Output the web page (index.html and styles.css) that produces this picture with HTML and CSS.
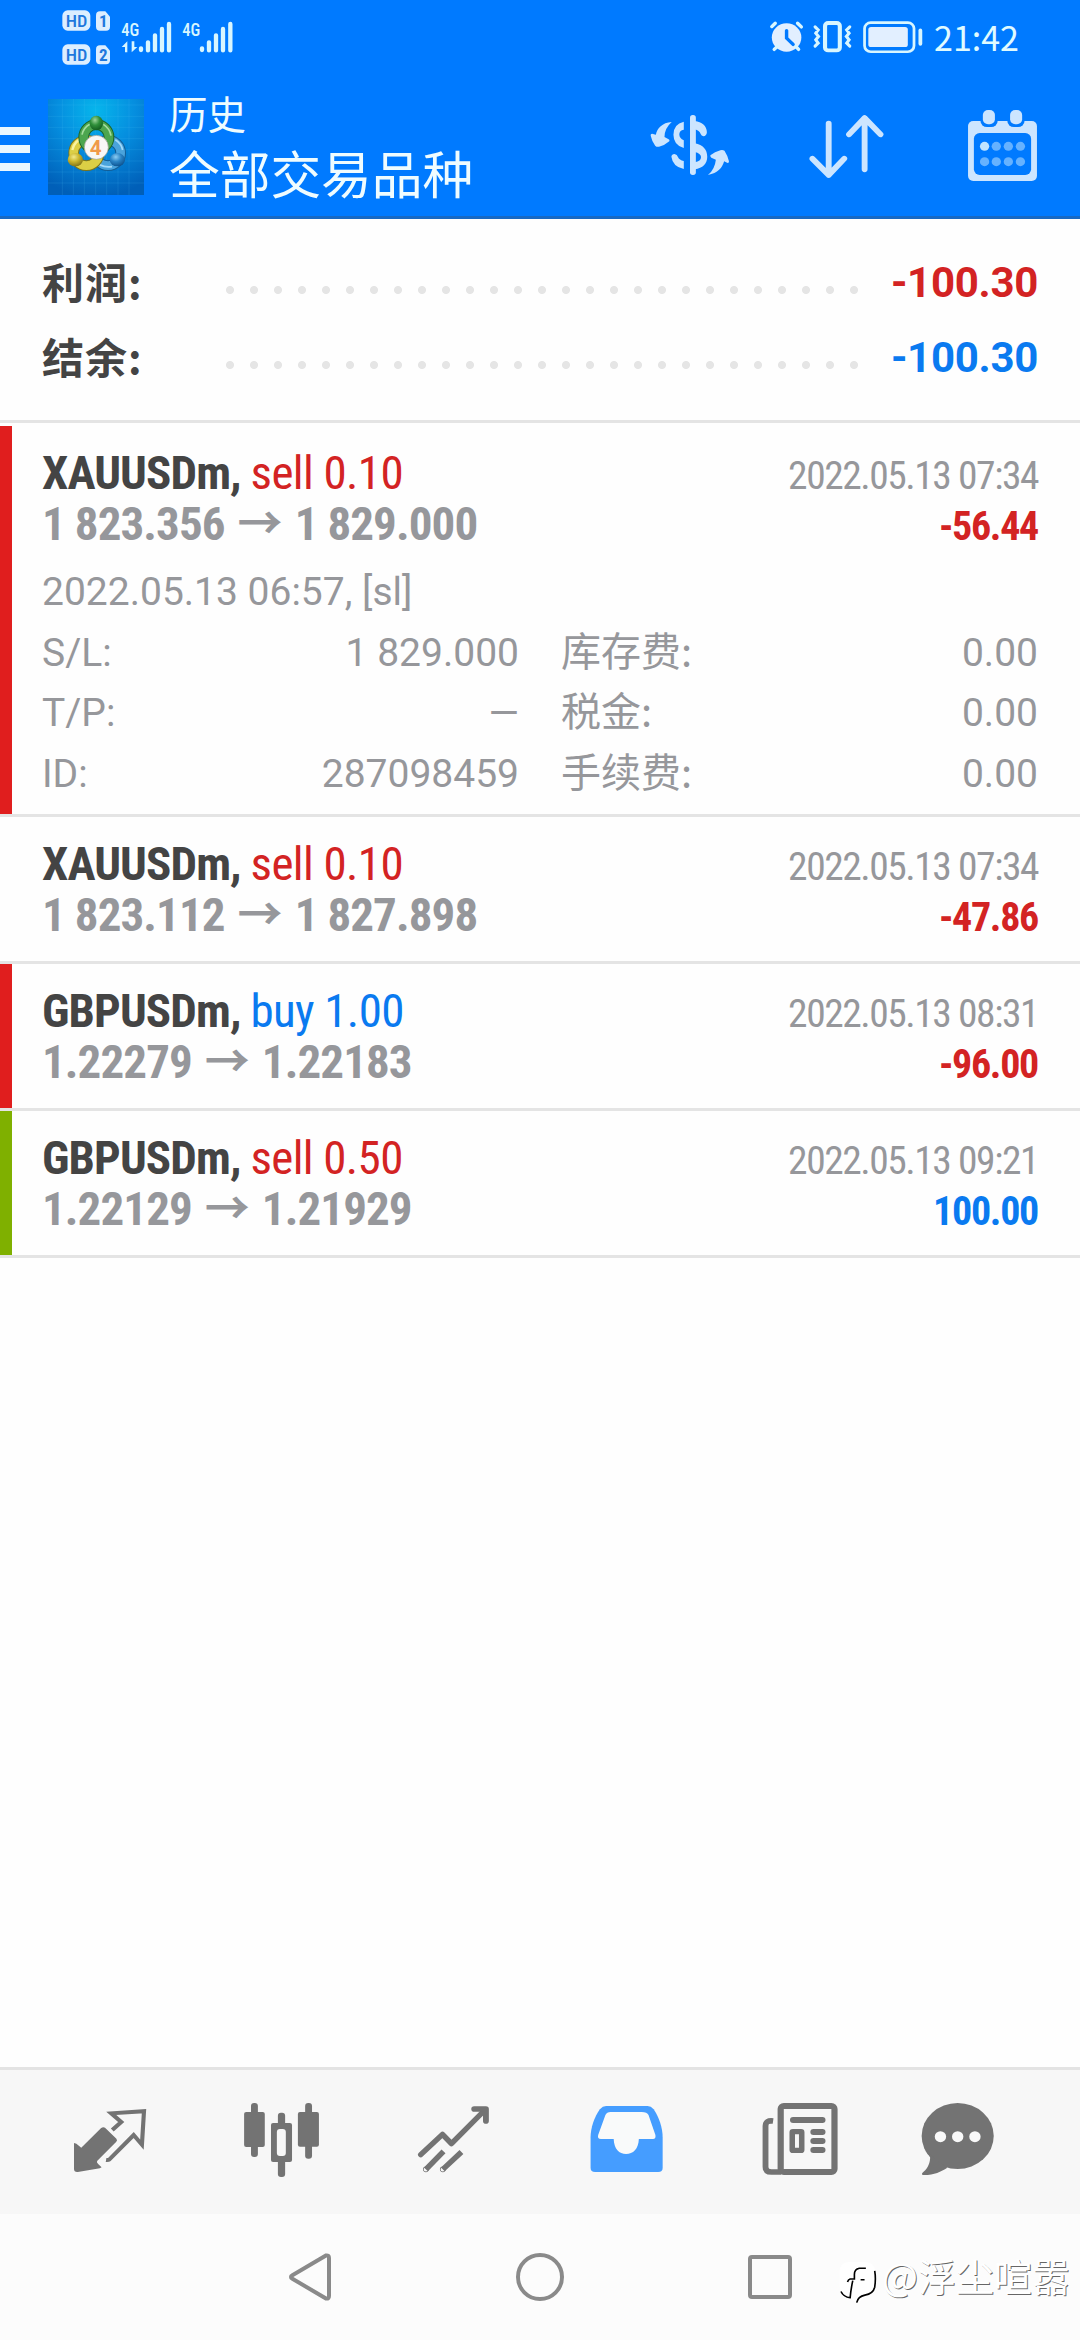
FILE: index.html
```
<!DOCTYPE html>
<html lang="zh-CN">
<head>
<meta charset="utf-8">
<title>历史</title>
<link rel="stylesheet" href="styles.css">
</head>
<body>
<div class="screen">
  <header class="header">
    <div class="status">
      <svg class="status-left" viewBox="0 0 600 225">
        <g fill="#dceeff">
          <rect x="37" y="31" width="84" height="61" rx="16"/>
          <path d="M150 34H166L180 50V80Q180 92 168 92H150Q138 92 138 80V46Q138 34 150 34Z"/>
          <rect x="37" y="133" width="84" height="61" rx="16"/>
          <path d="M150 136H166L180 152V181Q180 193 168 193H150Q138 193 138 181V148Q138 136 150 136Z"/>
        </g>
        <g class="badge-text">
          <text x="47" y="80" textLength="65" lengthAdjust="spacingAndGlyphs">HD</text>
          <text x="147" y="81" class="sim">1</text>
          <text x="47" y="182" textLength="65" lengthAdjust="spacingAndGlyphs">HD</text>
          <text x="147" y="183" class="sim">2</text>
        </g>
        <g class="net-text">
          <text x="214" y="107" textLength="54" lengthAdjust="spacingAndGlyphs">4G</text>
          <text x="397" y="107" textLength="54" lengthAdjust="spacingAndGlyphs">4G</text>
        </g>
        <path fill="#d8f6ff" d="M232 124V157H225V141H215ZM245 124V157L262 141H253V124Z"/>
        <g stroke="#d8f6ff" stroke-width="13" stroke-linecap="round">
          <path d="M273 145V150M294 127V151M315 106V151M336 87V151M357 72V151"/>
          <path d="M456 145V150M477 127V151M498 106V151M519 87V151M541 72V151"/>
        </g>
      </svg>
      <div class="status-right">
        <svg class="status-icons" viewBox="655 55 460 115" preserveAspectRatio="none">
          <circle cx="712" cy="114" r="43" fill="#e2efff"/>
          <g stroke="#d8f6ff" stroke-width="10" stroke-linecap="round" fill="none">
            <path d="M669 81L679 71M744 71L755 82M676 150L686 140M747 150L738 140"/>
            <path stroke="#007aff" d="M712 93V116L731 135"/>
            <rect x="824" y="70" width="43" height="83" rx="9" stroke-width="12"/>
            <path stroke-width="9" d="M795 82L804 91L797 101L805 111L797 121L804 131L795 140M896 82L887 91L894 101L886 111L894 121L887 131L896 140"/>
            <rect x="939" y="69" width="144" height="88" rx="18" stroke-width="8"/>
          </g>
          <rect x="950" y="82" width="115" height="61" rx="8" fill="#e2efff"/>
          <rect x="1096" y="87" width="11" height="52" rx="6" fill="#d8f6ff"/>
        </svg>
        <span class="clock">21:42</span>
      </div>
    </div>
    <div class="toolbar">
      <div class="menu"><i></i><i></i><i></i></div>
      <svg class="logo" viewBox="12 12 288 288">
        <defs>
          <radialGradient id="sky" cx=".5" cy=".12" r=".9"><stop offset="0" stop-color="#06b6ec"/><stop offset=".45" stop-color="#058edf"/><stop offset="1" stop-color="#005fb8"/></radialGradient>
          <radialGradient id="green" cx=".4" cy=".3" r=".7"><stop offset="0" stop-color="#9ed69b"/><stop offset=".5" stop-color="#2f8f3a"/><stop offset="1" stop-color="#145f20"/></radialGradient>
          <radialGradient id="gold" cx=".4" cy=".3" r=".7"><stop offset="0" stop-color="#f2ea8a"/><stop offset=".5" stop-color="#c9b52c"/><stop offset="1" stop-color="#86781a"/></radialGradient>
          <radialGradient id="azure" cx=".4" cy=".3" r=".7"><stop offset="0" stop-color="#8ccdf3"/><stop offset=".5" stop-color="#2a84c6"/><stop offset="1" stop-color="#0f5592"/></radialGradient>
        </defs>
        <rect x="12" y="12" width="288" height="288" fill="url(#sky)"/>
        <path stroke="#5cc8f5" stroke-opacity=".22" stroke-width="2" d="M55 12V300M88 12V300M121 12V300M155 12V300M188 12V300M222 12V300M255 12V300M12 30H300M12 64H300M12 97H300M12 131H300M12 164H300M12 198H300M12 231H300M12 264H300"/>
        <g fill="none">
          <circle cx="192" cy="174" r="38" stroke="#145d94" stroke-width="32"/>
          <circle cx="192" cy="174" r="38" stroke="#4aa3dc" stroke-width="26"/>
          <path d="M150 192Q168 220 204 215M214 134Q232 145 236 165" stroke="#a3dafa" stroke-width="5"/>
          <circle cx="127" cy="174" r="38" stroke="#7d7418" stroke-width="32"/>
          <circle cx="127" cy="174" r="38" stroke="#dccf45" stroke-width="26"/>
          <path d="M85 165Q91 136 119 129" stroke="#faf3a0" stroke-width="7"/>
          <circle cx="157" cy="127" r="38" stroke="#1d6527" stroke-width="32"/>
          <circle cx="157" cy="127" r="38" stroke="#4da64f" stroke-width="26"/>
          <path d="M114 119Q119 98 137 88M178 88Q197 100 201 122" stroke="#a7dda0" stroke-width="5"/>
        </g>
        <ellipse cx="157" cy="84" rx="20" ry="22" fill="url(#green)"/>
        <ellipse cx="94" cy="194" rx="23" ry="20" fill="url(#gold)"/>
        <ellipse cx="220" cy="194" rx="23" ry="20" fill="url(#azure)"/>
        <circle cx="157" cy="157" r="36" fill="#f8f7f6" stroke="#9b9b8f" stroke-width="2"/>
        <text x="155" y="179" text-anchor="middle" class="logo-num">4</text>
      </svg>
      <div class="titles">
        <div class="subtitle">历史</div>
        <div class="title">全部交易品种</div>
      </div>
      <div class="actions">
        <svg class="act-exchange" viewBox="320 324 232 225" preserveAspectRatio="none" fill="#cce5ff">
          <path d="M383 366C355 368 341 385 337 404L326 401Q321 401 322 407Q326 425 335 437Q340 442 346 440Q362 437 376 424Q378 420 374 418L362 411Q362 385 383 366Z"/>
          <path d="M488 525C517 520 530 503 535 484L545 489Q550 489 549 484Q546 468 536 452Q530 449 524 451Q508 455 495 466Q494 470 498 473L511 479Q508 508 488 525Z"/>
          <rect x="436" y="345" width="17" height="180" rx="8"/>
          <path d="M418 365V389Q405 391 405 403Q405 415 418 421V444Q388 435 388 404Q388 372 418 365Z"/>
          <path d="M382 470Q383 462 391 462Q399 463 401 471Q405 480 418 483V507Q386 500 382 470Z"/>
          <path d="M450 363C470 366 485 377 485 397Q484 408 475 409Q469 407 467 402Q463 391 450 388Z"/>
          <path d="M450 430C474 434 486 450 486 470C486 491 473 504 450 508V487Q468 484 468 471Q467 460 450 456Z"/>
        </svg>
        <svg class="act-sort" viewBox="780 324 220 225" preserveAspectRatio="none" fill="none" stroke="#cce5ff" stroke-width="17" stroke-linecap="round" stroke-linejoin="round">
          <path d="M837 371V525M790 476L837 525L882 476M941 508V355M896 403L941 354L987 403"/>
        </svg>
        <svg class="act-calendar" viewBox="1240 324 206 225" preserveAspectRatio="none">
          <rect x="1243" y="363" width="200" height="180" rx="15" fill="#cce5ff"/>
          <rect x="1260" y="399" width="166" height="126" rx="17" fill="#007aff"/>
          <rect x="1279" y="318" width="50" height="63" rx="19" fill="#007aff"/>
          <rect x="1357" y="318" width="50" height="63" rx="19" fill="#007aff"/>
          <rect x="1286" y="330" width="35" height="43" rx="15" fill="#cce5ff"/>
          <rect x="1365" y="330" width="35" height="43" rx="15" fill="#cce5ff"/>
          <g fill="#66b2ff">
            <circle cx="1291" cy="439" r="13.5" fill="#bfe4ff"/><circle cx="1325" cy="439" r="13.5"/><circle cx="1360" cy="439" r="13.5"/><circle cx="1395" cy="439" r="13.5"/>
            <circle cx="1291" cy="485" r="13.5"/><circle cx="1325" cy="485" r="13.5"/><circle cx="1360" cy="485" r="13.5"/><circle cx="1395" cy="485" r="13.5"/>
          </g>
        </svg>
      </div>
    </div>
  </header>

  <section class="summary">
    <div class="sum-row"><span class="sum-label">利润:</span><span class="dots"></span><span class="sum-value red">-100.30</span></div>
    <div class="sum-row"><span class="sum-label">结余:</span><span class="dots"></span><span class="sum-value blue">-100.30</span></div>
  </section>

  <main class="deals">
    <article class="deal loss first">
      <div class="line"><span class="name"><b>XAUUSDm,</b> <span class="side red">sell 0.10</span></span><time>2022.05.13 07:34</time></div>
      <div class="line"><span class="price">1 823.356 <i>→</i> 1 829.000</span><span class="profit red">-56.44</span></div>
      <div class="details">
        <div class="comment">2022.05.13 06:57, [sl]</div>
        <div class="pair"><span>S/L:</span><span>1 829.000</span></div><div class="pair"><span class="cjk">库存费:</span><span>0.00</span></div>
        <div class="pair"><span>T/P:</span><span>—</span></div><div class="pair"><span class="cjk">税金:</span><span>0.00</span></div>
        <div class="pair"><span>ID:</span><span>287098459</span></div><div class="pair"><span class="cjk">手续费:</span><span>0.00</span></div>
      </div>
    </article>
    <article class="deal">
      <div class="line"><span class="name"><b>XAUUSDm,</b> <span class="side red">sell 0.10</span></span><time>2022.05.13 07:34</time></div>
      <div class="line"><span class="price">1 823.112 <i>→</i> 1 827.898</span><span class="profit red">-47.86</span></div>
    </article>
    <article class="deal loss">
      <div class="line"><span class="name"><b>GBPUSDm,</b> <span class="side blue">buy 1.00</span></span><time>2022.05.13 08:31</time></div>
      <div class="line"><span class="price">1.22279 <i>→</i> 1.22183</span><span class="profit red">-96.00</span></div>
    </article>
    <article class="deal gain">
      <div class="line"><span class="name"><b>GBPUSDm,</b> <span class="side red">sell 0.50</span></span><time>2022.05.13 09:21</time></div>
      <div class="line"><span class="price">1.22129 <i>→</i> 1.21929</span><span class="profit blue">100.00</span></div>
    </article>
  </main>

  <nav class="tabs">
    <svg viewBox="203.4 150 232 240" preserveAspectRatio="none">
      <path fill="#737373" d="M215 279L222 281L236 293L293 235Q299 229 305 233L338 266Q342 271 337 276L282 333Q280 337 285 342L295 352L290 355L226 366Q215 367 215 357Z"/>
      <path fill="none" stroke="#737373" stroke-width="12" d="M326 240L352 216L323 190L418 183.500L412 284L388 255L318 328Q314 331 308 330"/>
    </svg>
    <svg viewBox="702.9 150 232 240" preserveAspectRatio="none" fill="#737373">
      <rect x="729" y="159" width="20" height="162" rx="9"/><rect x="709" y="186" width="60" height="105" rx="6"/>
      <rect x="886" y="159" width="20" height="167" rx="9"/><rect x="865" y="186" width="61" height="104" rx="6"/>
      <rect x="807" y="188" width="21" height="193" rx="9"/><rect x="787" y="219" width="61" height="117" rx="6"/>
      <rect x="804" y="237" width="26" height="81" rx="9" fill="#f7f7f7"/>
    </svg>
    <svg viewBox="1202.4 150 232 240" preserveAspectRatio="none" fill="none" stroke="#737373" stroke-width="16" stroke-linejoin="round">
      <path stroke-linecap="round" d="M1222 314L1285 253L1311 281L1405 183"/>
      <path stroke-linecap="round" stroke-width="17" d="M1377 177H1411V213"/>
      <path d="M1237 358L1288 304M1286 358L1340 306"/>
      <circle cx="1237" cy="358" r="1" stroke-width="15"/><circle cx="1286" cy="358" r="1" stroke-width="15"/>
    </svg>
    <svg viewBox="133.700 150 232 240" preserveAspectRatio="none">
      <path fill="#459dff" d="M147 262C147 235 158 200 174 178Q182 168 192 168H312Q322 168 330 178C345 200 356 235 356 262V353Q356 366 343 366H160Q147 366 147 353Z"/>
      <path fill="#f9fafa" d="M205 186H295Q311 186 315 195L335 255Q337 267 328 267H287C286 297 270 312 250 312C230 312 215 297 214 267H177Q166 267 169 255L190 195Q194 186 205 186Z"/>
    </svg>
    <svg viewBox="633.2 150 232 240" preserveAspectRatio="none" fill="none" stroke="#737373">
      <rect x="699" y="168" width="156" height="198" rx="9" stroke-width="18"/>
      <path stroke-width="17" d="M677 213Q655 210 655 228V350Q655 366 672 366H700"/>
      <path stroke-width="18" stroke-linecap="round" d="M735 210H820M794 246H820M794 273H820M794 300H820"/>
      <rect x="732.500" y="245" width="27.500" height="56" rx="2" stroke-width="16"/>
    </svg>
    <svg viewBox="1132.7 150 232 240" preserveAspectRatio="none">
      <g fill="#737373"><ellipse cx="1213" cy="258" rx="104.500" ry="99"/>
      <path d="M1117 300Q1136 320 1133 325C1132 345 1122 360 1111 368Q1106 375 1116 375C1145 375 1165 365 1183 353Z"/></g>
      <g fill="#f9f9f9"><circle cx="1163" cy="260" r="16.500"/><circle cx="1213" cy="260" r="16.500"/><circle cx="1263" cy="260" r="16.500"/></g>
    </svg>
  </nav>

  <footer class="sysnav">
    <svg viewBox="0 0 48 48"><path d="M5 24Q5 23 6 22.500L40 2.500Q43 2 43 5V43Q43 46 40 45.500L6 25.500Q5 25 5 24Z"/></svg>
    <svg viewBox="0 0 48 48"><circle cx="24" cy="24" r="22"/></svg>
    <svg viewBox="0 0 48 48"><rect x="4" y="4" width="40" height="40" rx="2"/></svg>
  </footer>
  <div class="watermark">
    <svg viewBox="56 60 116 132">
      <path fill="#fff" d="M82 66H140Q168 68 168 100V140Q166 165 140 170L112 190L82 172Q58 166 58 140V92Q60 68 82 66Z"/>
      <path fill="none" stroke="#000" stroke-width="5" d="M138 84H118Q103 87 103 103V117H90Q84 119 82 126M103 117V119M122 119H134M98 122Q92 150 90 174Q70 172 62 155M165 92Q169 115 165 142Q160 162 135 166Q114 170 110 189"/>
    </svg>
    <span>@浮尘喧嚣</span>
  </div>
</div>
</body>
</html>
```
FILE: styles.css
```
* { box-sizing: border-box; }
body { margin: 0; background: #fff; }
svg { display: block; flex: none; }

.screen {
  position: relative;
  display: flex;
  flex-direction: column;
  width: 1080px;
  height: 2340px;
  overflow: hidden;
  background: #fefefe;
  font-family: Roboto, "Noto Sans CJK SC", sans-serif;
}
.red { color: #d32323; }
.blue { color: #0a7af0; }

/* header */
.header { height: 219px; background: #007aff; border-bottom: 3px solid #1769c4; }
.status { display: flex; justify-content: space-between; height: 75px; padding: 0 61px 0 50px; }
.status-left { width: 200px; height: 75px; }
.badge-text { font: 500 51px "Roboto Condensed", sans-serif; fill: #1f78dd; }
.badge-text .sim { font-weight: 700; }
.net-text { font: 500 57px "Roboto Condensed", sans-serif; fill: #d8f6ff; }
.status-right { display: flex; align-items: flex-start; gap: 9px; }
.status-icons { width: 158px; height: 38px; margin-top: 18px; }
.clock { font: 400 34px/50px "Noto Sans CJK SC", sans-serif; margin-top: 12px; color: #e0fbff; }

.toolbar { display: flex; height: 141px; }
.menu { display: flex; flex-direction: column; gap: 10px; width: 30px; margin-top: 52px; }
.menu i { height: 8px; background: #eaf7ff; }
.logo { width: 96px; height: 96px; margin: 24px 0 0 18px; }
.logo-num { font: 700 62px Roboto, sans-serif; fill: #f09a4a; }
.titles { flex: 1; padding: 11px 0 0 25px; color: #effcff; font-family: "Noto Sans CJK SC", sans-serif; white-space: nowrap; }
.subtitle { font-size: 38.5px; line-height: 52px; }
.title { font-size: 50.7px; line-height: 68px; }
.actions { display: flex; padding: 33px 42px 0 0; }
.actions svg { height: 75px; }
.act-exchange { width: 80px; }
.act-sort { width: 76px; margin-left: 79px; }
.act-calendar { width: 71px; margin-left: 82px; }

/* summary */
.summary { height: 204px; padding: 26px 42px 0; border-bottom: 3px solid #e4e4e4; }
.sum-row { display: flex; height: 75px; line-height: 75px; font-size: 42px; font-weight: 700; }
.sum-label { width: 176px; color: #444; font-family: "Noto Sans CJK SC", sans-serif; line-height: 71px; letter-spacing: 1px; }
.dots { width: 648px; background: radial-gradient(circle at 12px 45px, #e5e5e5 3.6px, transparent 4.4px) 0 0 / 24px 75px repeat-x; }
.sum-value { flex: 1; text-align: right; white-space: nowrap; letter-spacing: -0.3px; }

/* deals */
.deals { flex: 1; padding-top: 3px; }
.deal { height: 147px; padding: 21px 42px 0; border-bottom: 3px solid #e4e4e4; }
.deal.loss { background: linear-gradient(#e01e1e, #e01e1e) 0 0 / 12px 100% no-repeat; }
.deal.gain { background: linear-gradient(#7fb000, #7fb000) 0 0 / 12px 100% no-repeat; }
.deal.first { height: 391px; }
.line { display: flex; justify-content: space-between; align-items: baseline; height: 51px; line-height: 51px; font-family: "Roboto Condensed", Roboto, sans-serif; white-space: nowrap; }
.name { font-size: 47px; letter-spacing: -0.9px; color: #444; }
.side { letter-spacing: -0.6px; }
.price { font-size: 47px; font-weight: 700; letter-spacing: -0.9px; color: #96979b; }
.price i { display: inline-block; margin: 0 3px; font: 700 45px/0 "Noto Sans CJK SC", sans-serif; }
.line time { font-size: 39.5px; color: #96979b; letter-spacing: -1.45px; }
.profit { font-size: 40px; font-weight: 700; letter-spacing: -1.3px; }

.details { display: grid; grid-template-columns: 477px 477px; column-gap: 42px; grid-auto-rows: 60.7px; margin-top: 13px; font-size: 39px; line-height: 61px; color: #96979b; }
.comment { grid-column: 1 / 3; }
.pair { display: flex; justify-content: space-between; align-items: baseline; }
.cjk { font-family: "Noto Sans CJK SC", sans-serif; font-size: 40px; line-height: 40px; }

/* bottom tabs */
.tabs { display: flex; justify-content: flex-start; gap: 92px; height: 147px; padding: 30px 0 0 70px; background: #f7f7f7; border-top: 3px solid #e3e3e3; }
.tabs svg { width: 80px; height: 80px; overflow: visible; }

/* system navigation */
.sysnav { display: flex; justify-content: center; align-items: center; gap: 182px; height: 126px; background: #fcfcfc; }
.sysnav svg { width: 48px; height: 48px; fill: none; stroke: #8a8a8a; stroke-width: 4; }

.watermark { position: absolute; left: 839px; top: 2251px; display: flex; align-items: flex-start; }
.watermark svg { width: 38px; height: 44px; margin-top: 9px; }
.watermark span { margin-left: 5px; font: 400 38px/48px "Noto Sans CJK SC", sans-serif; color: #fff; text-shadow: 1px 1px 0 rgba(0, 0, 0, .6); white-space: nowrap; }
```
